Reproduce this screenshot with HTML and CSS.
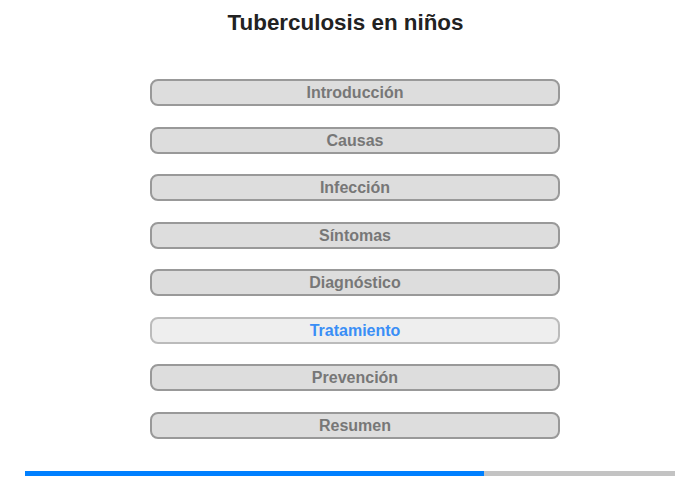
FILE: index.html
```html
<!DOCTYPE html>
<html>
<head>
<meta charset="utf-8">
<link rel="stylesheet" href="styles.css">
</head>
<body>
<div class="page">
  <h1 class="title">Tuberculosis en niños</h1>
  <nav class="menu">
    <div class="item">Introducción</div>
    <div class="item">Causas</div>
    <div class="item">Infección</div>
    <div class="item">Síntomas</div>
    <div class="item">Diagnóstico</div>
    <div class="item active">Tratamiento</div>
    <div class="item">Prevención</div>
    <div class="item">Resumen</div>
  </nav>
  <div class="progress"><div class="fill" style="width:70.6%"></div></div>
</div>
</body>
</html>
```
FILE: styles.css
```css
html, body { margin: 0; padding: 0; background: #fff; }
.page {
  width: 700px;
  height: 480px;
  font-family: "Liberation Sans", Arial, sans-serif;
  display: flex;
  flex-direction: column;
  align-items: flex-start;
}
.title {
  align-self: center;
  margin: 10px 9px 0 0;
  font-size: 22.4px;
  line-height: 26px;
  font-weight: bold;
  color: #222;
}
.menu {
  margin: 43px 0 0 150px;
  width: 410px;
  display: flex;
  flex-direction: column;
  gap: 20.5px;
}
.item {
  box-sizing: border-box;
  height: 27px;
  border: 2px solid #999;
  border-radius: 8px;
  background: #ddd;
  color: #777;
  font-size: 16px;
  font-weight: bold;
  text-align: center;
  line-height: 23px;
}
.item.active {
  background: #eee;
  border-color: #bbb;
  color: #3a8ef6;
}
.progress {
  margin: 32px 0 0 25px;
  width: 650px;
  height: 5px;
  background: #c3c3c3;
  display: flex;
}
.fill {
  height: 100%;
  background: #0080ff;
}
```
